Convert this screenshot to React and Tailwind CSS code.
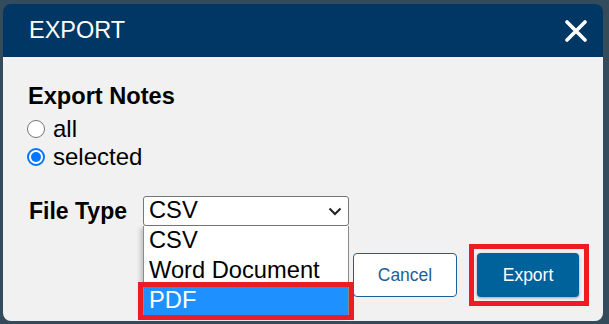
import React from "react";

// Export dialog: notes scope radios, file type select with open list
const fileTypes = ["CSV", "Word Document", "PDF"];

export default function App() {
  return (
    <div
      className="w-[609px] h-[324px] bg-[#344b5b] pt-[4px] pl-[3px] overflow-hidden"
      style={{ fontFamily: '"Liberation Sans", Arial, sans-serif' }}
    >
      <div className="w-[600px] h-[317px] rounded-[8px] overflow-hidden flex flex-col">
        {/* header */}
        <div className="h-[53px] shrink-0 bg-[#003764] flex items-center justify-between pl-[26px] pr-[16px]">
          <span className="text-white text-[23.5px] leading-none">EXPORT</span>
          <svg width="22" height="22" viewBox="0 0 22 22">
            <path d="M2 2 L20 20 M20 2 L2 20" stroke="#fff" strokeWidth="3.6" strokeLinecap="round" />
          </svg>
        </div>

        {/* body */}
        <div className="flex-1 bg-[#f1f1f1] px-[24px] pt-[25px] text-black">
          <h2 className="text-[23.6px] leading-[28px] font-bold pl-[1px]">Export Notes</h2>
          <div className="mt-[5px] flex flex-col">
            <Radio label="all" />
            <Radio label="selected" checked />
          </div>

          <div className="mt-[25px] flex items-center h-[30px]">
            <span className="w-[116px] shrink-0 pl-[2px] text-[23px] leading-[28px] font-bold">File Type</span>
            <div className="relative">
              <div className="w-[206px] h-[30px] bg-white border border-[#767676] rounded-[3px] flex items-center justify-between pl-[5px] pr-[6px]">
                <span className="text-[23.7px] leading-none">CSV</span>
                <svg width="14" height="9" viewBox="0 0 14 9">
                  <path d="M1.5 1.5 L7 7 L12.5 1.5" fill="none" stroke="#222" strokeWidth="2" />
                </svg>
              </div>
              {/* open option list */}
              <div className="absolute left-0 top-full w-[206px] bg-white border border-t-0 border-[#8a8a8a] shadow-[-3px_2px_4px_rgba(0,0,0,0.18)]">
                {fileTypes.map((t) => (
                  <div
                    key={t}
                    className={
                      t === "PDF"
                        ? "h-[30px] flex items-center pl-[5px] text-[23.7px] leading-none bg-[#1e90ff] text-white"
                        : "h-[30px] flex items-center pl-[5px] text-[23.7px] leading-none"
                    }
                  >
                    {t}
                  </div>
                ))}
                <div className="absolute left-[-6px] top-[56px] w-[216px] h-[38px] border-[5px] border-[#ed1c24]" />
              </div>
            </div>
          </div>

          <div className="mt-[27px] flex justify-end gap-[20px]">
            <button className="w-[104px] h-[44px] bg-white border border-[#1d5f99] rounded-[4px] text-[#1d5f99] text-[17.5px]">
              Cancel
            </button>
            <div className="relative">
              <button className="w-[102px] h-[44px] bg-[#00629b] rounded-[4px] text-white text-[17.5px] shadow-[0_1px_3px_rgba(0,0,0,0.35)]">
                Export
              </button>
              <div className="absolute left-[-8px] right-[-10px] top-[-9px] bottom-[-9px] border-[5px] border-[#ed1c24]" />
            </div>
          </div>
        </div>
      </div>
    </div>
  );
}

function Radio({ label, checked }) {
  return (
    <div className="h-[28px] flex items-center gap-[8px]">
      {checked ? (
        <span className="shrink-0 w-[18px] h-[18px] rounded-full border-[2px] border-[#0075ff] bg-white flex items-center justify-center">
          <span className="w-[10px] h-[10px] rounded-full bg-[#0075ff]" />
        </span>
      ) : (
        <span className="shrink-0 w-[18px] h-[18px] rounded-full border-[1.5px] border-[#767676] bg-white" />
      )}
      <span className="text-[24px] leading-[28px]">{label}</span>
    </div>
  );
}
